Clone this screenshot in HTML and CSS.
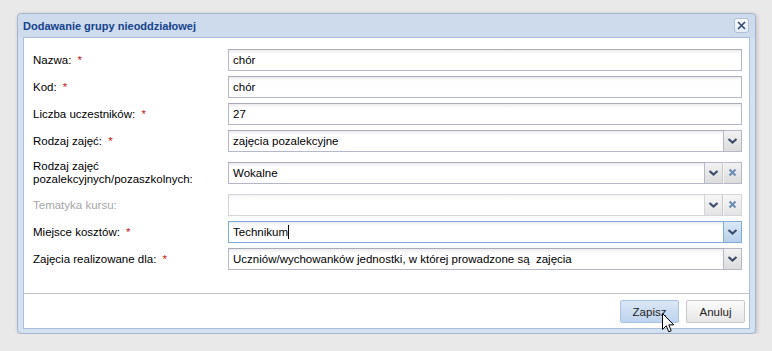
FILE: index.html
```html
<!DOCTYPE html>
<html lang="pl">
<head>
  <meta charset="UTF-8">
  <title>Dodawanie grupy nieoddziałowej</title>
  <link rel="stylesheet" href="styles.css">
</head>
<body>
  <div class="window">
    <div class="window-header">
      <span class="window-title">Dodawanie grupy nieoddziałowej</span>
      <span class="close-btn">
        <svg width="11" height="11" viewBox="0 0 11 11"><path d="M2 2 L9 9 M9 2 L2 9" stroke="#2c4a78" stroke-width="1.6" fill="none"/></svg>
      </span>
    </div>

    <div class="panel">
      <div class="form">
        <div class="row">
          <label class="label">Nazwa: <span class="req">*</span></label>
          <div class="field"><div class="input">chór</div></div>
        </div>
        <div class="row">
          <label class="label">Kod: <span class="req">*</span></label>
          <div class="field"><div class="input">chór</div></div>
        </div>
        <div class="row">
          <label class="label">Liczba uczestników: <span class="req">*</span></label>
          <div class="field"><div class="input">27</div></div>
        </div>
        <div class="row">
          <label class="label">Rodzaj zajęć: <span class="req">*</span></label>
          <div class="field">
            <div class="input">zajęcia pozalekcyjne</div>
            <span class="trigger"><svg width="17" height="20" viewBox="0 0 17 20"><path d="M4.5 8 L8.5 11.5 L12.5 8" stroke="#3b4d6b" stroke-width="2.2" fill="none"/></svg></span>
          </div>
        </div>
        <div class="row row-tall">
          <label class="label">Rodzaj zajęć<br>pozalekcyjnych/pozaszkolnych:</label>
          <div class="field">
            <div class="input">Wokalne</div>
            <span class="trigger"><svg width="17" height="20" viewBox="0 0 17 20"><path d="M4.5 8 L8.5 11.5 L12.5 8" stroke="#3b4d6b" stroke-width="2.2" fill="none"/></svg></span>
            <span class="trigger clear"><svg width="17" height="20" viewBox="0 0 17 20"><path d="M5.5 6.5 L11.5 12.5 M11.5 6.5 L5.5 12.5" stroke="#6a8cb4" stroke-width="2" fill="none"/></svg></span>
          </div>
        </div>
        <div class="row disabled">
          <label class="label">Tematyka kursu:</label>
          <div class="field">
            <div class="input"></div>
            <span class="trigger"><svg width="17" height="20" viewBox="0 0 17 20"><path d="M4.5 8 L8.5 11.5 L12.5 8" stroke="#3b4d6b" stroke-width="2.2" fill="none"/></svg></span>
            <span class="trigger clear"><svg width="17" height="20" viewBox="0 0 17 20"><path d="M5.5 6.5 L11.5 12.5 M11.5 6.5 L5.5 12.5" stroke="#6a8cb4" stroke-width="2" fill="none"/></svg></span>
          </div>
        </div>
        <div class="row">
          <label class="label">Miejsce kosztów: <span class="req">*</span></label>
          <div class="field focused">
            <div class="input">Technikum<span class="caret"></span></div>
            <span class="trigger"><svg width="17" height="20" viewBox="0 0 17 20"><path d="M4.5 8 L8.5 11.5 L12.5 8" stroke="#3b4d6b" stroke-width="2.2" fill="none"/></svg></span>
          </div>
        </div>
        <div class="row">
          <label class="label">Zajęcia realizowane dla: <span class="req">*</span></label>
          <div class="field">
            <div class="input">Uczniów/wychowanków jednostki, w której prowadzone są&nbsp; zajęcia</div>
            <span class="trigger"><svg width="17" height="20" viewBox="0 0 17 20"><path d="M4.5 8 L8.5 11.5 L12.5 8" stroke="#3b4d6b" stroke-width="2.2" fill="none"/></svg></span>
          </div>
        </div>
      </div>

      <div class="footer">
        <button class="btn btn-hover">Zapisz</button>
        <button class="btn">Anuluj</button>
        <svg class="mouse" width="13" height="20" viewBox="0 0 13 20"><path d="M0.5 0.5 L0.5 16.5 L4.3 12.8 L6.8 18.8 L9.2 17.8 L6.8 11.9 L11.8 11.9 Z" fill="#fff" stroke="#000" stroke-width="1"/></svg>
      </div>
    </div>
  </div>
</body>
</html>
```

FILE: styles.css
```css
body {
  margin: 0;
  background-color: #e9e9e9;
  font-family: "Liberation Sans", Arial, sans-serif;
  font-size: 11.5px;
  color: #000;
}
.window {
  margin: 13px 0 0 17px;
  width: 727px;
  border: 1px solid #a3b5cf;
  border-radius: 4px;
  background-color: #d3e1f1;
  padding: 0 5px 4px;
  box-shadow: 1px 1px 4px rgba(0, 0, 0, 0.18);
}
.window-header {
  height: 23px;
  display: flex;
  align-items: center;
  justify-content: space-between;
  background-color: #cddbed;
  margin: 0 -5px;
  padding: 0 6px 0 5px;
  border-radius: 4px 4px 0 0;
}
.window-title {
  font-weight: bold;
  font-size: 11px;
  color: #15428b;
}
.close-btn {
  width: 13px;
  height: 13px;
  border: 1px solid #aebfd6;
  border-radius: 3px;
  background: linear-gradient(#ffffff, #e3ebf5);
  display: flex;
  align-items: center;
  justify-content: center;
}
.panel {
  background-color: #fff;
  border: 1px solid #a9bfd9;
}
.form {
  padding: 11px 7px 23px 9px;
  display: flex;
  flex-direction: column;
  gap: 5px;
}
.row {
  display: flex;
  align-items: center;
  height: 22px;
}
.row-tall {
  height: 32px;
}
.label {
  width: 195px;
  flex-shrink: 0;
  line-height: 13px;
  color: #000;
}
.req {
  color: #c41a1a;
  margin-left: 3px;
}
.field {
  flex: 1;
  display: flex;
  height: 22px;
}
.input {
  flex: 1;
  border: 1px solid #b5b8c8;
  border-top-color: #a8abb8;
  background: linear-gradient(#ececec 0, #ffffff 4px);
  padding: 0 4px;
  line-height: 20px;
  white-space: nowrap;
  overflow: hidden;
}
.trigger {
  width: 17px;
  border: 1px solid #b5b8c8;
  border-left: none;
  background: linear-gradient(#f2f2f2, #dcdcdc);
  display: flex;
  align-items: center;
  justify-content: center;
}
.field .trigger:not(.clear) + .clear {
  border-left: 1px solid #f6f6f6;
}
.field:has(.clear) .trigger:not(.clear) {
  border-right: 1px solid #c9c9c9;
}
.disabled .label {
  color: #a6a6a6;
}
.disabled .input {
  border-color: #d4d6de;
  background: linear-gradient(#f4f4f4 0, #ffffff 4px);
}
.disabled .trigger {
  border-color: #d4d6de;
  background: linear-gradient(#f6f6f6, #e4e4e4);
}
.focused .input {
  border-color: #7eadd9;
}
.focused .trigger {
  border-color: #7eadd9;
  background: linear-gradient(#dbe8f6, #b9d0ea);
}
.caret {
  display: inline-block;
  width: 1px;
  height: 14px;
  background-color: #000;
  vertical-align: -3px;
}
.footer {
  position: relative;
  border-top: 1px solid #c3c3c3;
  padding: 6px 4px 5px;
  display: flex;
  justify-content: flex-end;
  gap: 7px;
}
.btn {
  width: 59px;
  height: 23px;
  font-family: "Liberation Sans", Arial, sans-serif;
  font-size: 11.5px;
  color: #222;
  border: 1px solid #c8c8c8;
  border-radius: 2px;
  background: linear-gradient(#fbfbfb, #e6e6e6);
  padding: 0;
}
.btn-hover {
  border-color: #a9c3e2;
  background: linear-gradient(#dbe7f5, #bdd3ee);
}
.mouse {
  position: absolute;
  left: 638px;
  top: 19px;
}
```
